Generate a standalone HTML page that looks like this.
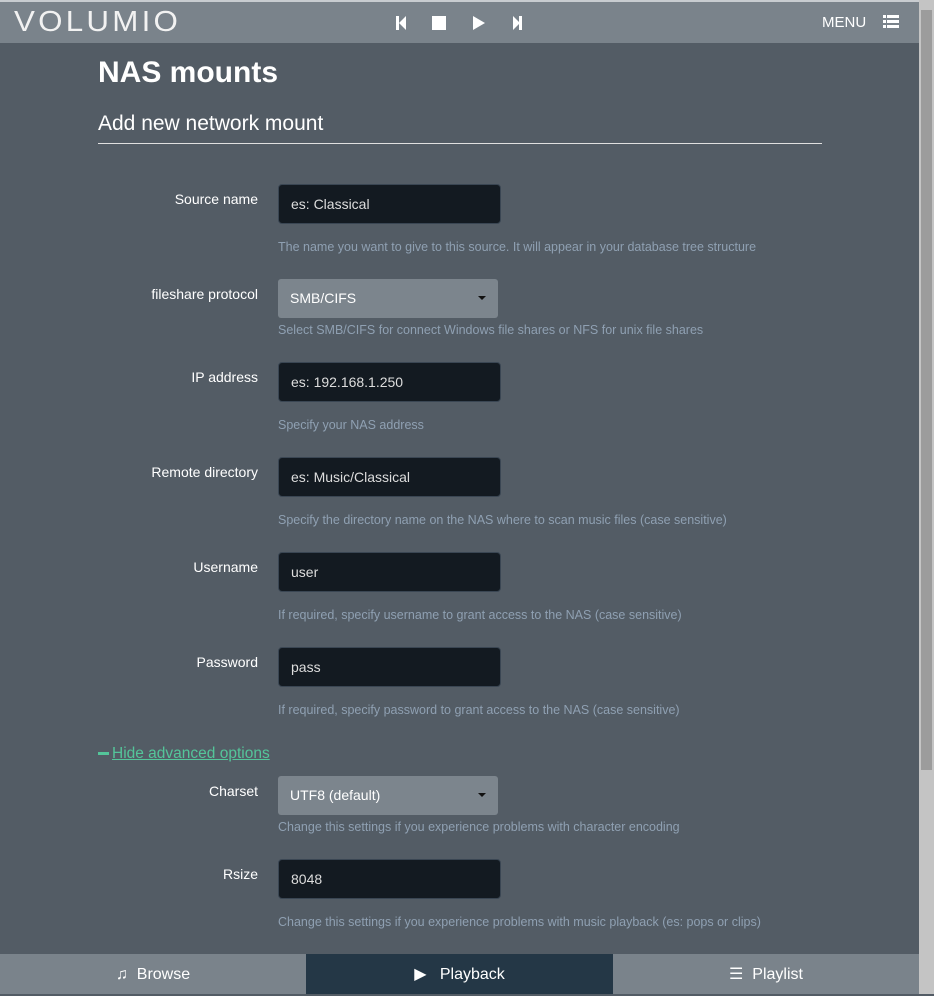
<!DOCTYPE html><html><head><style>
body{margin:0;width:934px;height:994px;background:#535c65;font-family:"Liberation Sans",sans-serif;overflow:hidden;position:relative;color:#fff}
.a{position:absolute}
.hdr{left:0;top:0;width:919px;height:43px;background:#7a838b;border-top:2px solid #c8ccd0;box-sizing:border-box}
.lbl{font-size:14px;text-align:right;width:160px;left:98px}
.in{left:278px;width:223px;height:40px;background:#131a21;border:1px solid #3a4653;border-radius:4px;box-sizing:border-box;font-size:14px;color:#ddd;padding:11px 12px}
.sel{left:278px;width:220px;height:39px;background:#7c858d;border-radius:3px;font-size:14px;padding:11px 12px;box-sizing:border-box}
.sel:after{content:"";position:absolute;right:12px;top:17px;border:4px solid transparent;border-top:4px solid #111}
.hint{left:278px;font-size:12.5px;color:#8fa0b2}
.bb{top:954px;height:40px;font-size:16px;text-align:center;line-height:42px}
</style></head><body>
<div class="a hdr"></div>
<div class="a" style="left:14px;top:6px;font-size:29px;letter-spacing:3px;color:#f2f2f2;transform:scaleX(1.08);transform-origin:left">VOLUMIO</div>
<svg class="a" style="left:394px;top:15px" width="135" height="17" fill="#fff"><rect x="2" y="1" width="3" height="14"/><path d="M12 1L5 8L12 15Z"/><rect x="38" y="1" width="14" height="14"/><path d="M79 1L91 8L79 15Z"/><path d="M119 1L126 8L119 15Z"/><rect x="125" y="1" width="3" height="14"/></svg>
<div class="a" style="left:822px;top:14px;font-size:15px">MENU</div>
<svg class="a" style="left:883px;top:15px" width="16" height="14" fill="#fff"><rect x="0" y="0" width="3" height="3"/><rect x="4" y="0" width="12" height="3"/><rect x="0" y="5" width="3" height="3"/><rect x="4" y="5" width="12" height="3"/><rect x="0" y="10" width="3" height="3"/><rect x="4" y="10" width="12" height="3"/></svg>
<div class="a" style="left:919px;top:0;width:15px;height:994px;background:#c4c4c4"></div>
<div class="a" style="left:921px;top:10px;width:11px;height:760px;background:#9c9c9c"></div>
<div class="a" style="left:98px;top:56px;font-size:30px;font-weight:bold">NAS mounts</div>
<div class="a" style="left:98px;top:112px;font-size:21px">Add new network mount</div>
<div class="a" style="left:98px;top:143px;width:724px;height:1px;background:#e0e0e0"></div>

<div class="a lbl" style="top:191px">Source name</div><div class="a in" style="top:184px">es: Classical</div>
<div class="a hint" style="top:240px">The name you want to give to this source. It will appear in your database tree structure</div>
<div class="a lbl" style="top:286px">fileshare protocol</div><div class="a sel" style="top:279px">SMB/CIFS</div>
<div class="a hint" style="top:323px">Select SMB/CIFS for connect Windows file shares or NFS for unix file shares</div>
<div class="a lbl" style="top:369px">IP address</div><div class="a in" style="top:362px">es: 192.168.1.250</div>
<div class="a hint" style="top:418px">Specify your NAS address</div>
<div class="a lbl" style="top:464px">Remote directory</div><div class="a in" style="top:457px">es: Music/Classical</div>
<div class="a hint" style="top:513px">Specify the directory name on the NAS where to scan music files (case sensitive)</div>
<div class="a lbl" style="top:559px">Username</div><div class="a in" style="top:552px">user</div>
<div class="a hint" style="top:608px">If required, specify username to grant access to the NAS (case sensitive)</div>
<div class="a lbl" style="top:654px">Password</div><div class="a in" style="top:647px">pass</div>
<div class="a hint" style="top:703px">If required, specify password to grant access to the NAS (case sensitive)</div>
<div class="a" style="left:98px;top:745px;font-size:15.5px;color:#54c59a"><span style="display:inline-block;width:11px;height:3px;background:#54c59a;vertical-align:middle;margin-right:3px"></span><u>Hide advanced options</u></div>
<div class="a lbl" style="top:783px">Charset</div><div class="a sel" style="top:776px">UTF8 (default)</div>
<div class="a hint" style="top:820px">Change this settings if you experience problems with character encoding</div>
<div class="a lbl" style="top:866px">Rsize</div><div class="a in" style="top:859px">8048</div>
<div class="a hint" style="top:915px">Change this settings if you experience problems with music playback (es: pops or clips)</div>

<div class="a bb" style="left:0;width:306px;background:#7a838b">&#9835;&nbsp; Browse</div>
<div class="a bb" style="left:306px;width:307px;background:#243746">&#9654;&nbsp;&nbsp; Playback</div>
<div class="a bb" style="left:613px;width:306px;background:#7a838b">&#9776;&nbsp; Playlist</div>
</body></html>
